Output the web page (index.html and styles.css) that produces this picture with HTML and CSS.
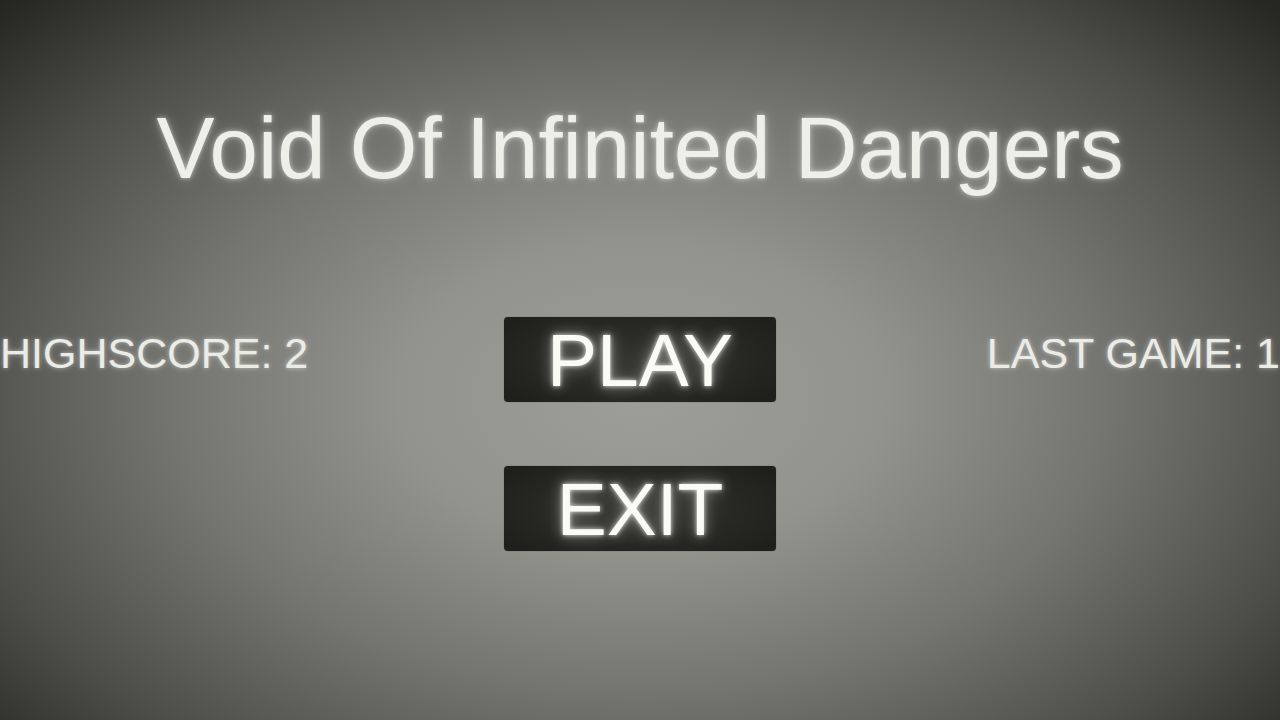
FILE: index.html
```html
<!DOCTYPE html>
<html lang="en">
<head>
    <meta charset="UTF-8">
    <meta name="viewport" content="width=device-width, initial-scale=1.0">
    <title>Void Of Infinited Dangers</title>
    <link rel="stylesheet" href="styles.css">
</head>
<body>
    <main class="menu">
        <h1 class="title">Void Of Infinited Dangers</h1>

        <div class="board">
            <div class="score score-left">HIGHSCORE: 2</div>
            <div class="buttons">
                <button class="menu-btn">PLAY</button>
                <button class="menu-btn">EXIT</button>
            </div>
            <div class="score score-right">LAST GAME: 1</div>
        </div>
    </main>
</body>
</html>
```

FILE: styles.css
```css
html, body {
    height: 100%;
}
body {
    margin: 0;
    overflow: hidden;
    font-family: 'Liberation Sans', Arial, sans-serif;
    background: radial-gradient(ellipse 76% 86% at 50% 55%, #9d9e98 0%, #92938d 25%, #747570 48%, #4c4d48 72%, #272824 90%, #1a1a18 100%);
    color: #f2f2ec;
}
.menu {
    display: flex;
    flex-direction: column;
    height: 100%;
}
.title {
    margin: 98px 0 0;
    font-size: 87px;
    font-weight: normal;
    line-height: 1.15;
    text-align: center;
    color: #efefe9;
    text-shadow: 0 0 5px rgba(255,255,255,0.55), 0 0 14px rgba(255,255,255,0.25);
}
.board {
    display: grid;
    grid-template-columns: 1fr 272px 1fr;
    gap: 40px;
    margin-top: 119px;
}
.score {
    font-size: 43px;
    line-height: 73px;
    white-space: nowrap;
    color: #ecece6;
    text-shadow: 0 0 4px rgba(255,255,255,0.45), 0 0 10px rgba(255,255,255,0.2);
}
.score-left {
    text-align: left;
}
.score-right {
    text-align: right;
}
.buttons {
    display: flex;
    flex-direction: column;
    gap: 64px;
}
.menu-btn {
    height: 85px;
    padding: 1px 0 0;
    border: none;
    border-radius: 4px;
    background: radial-gradient(ellipse 60% 70% at 50% 50%, #33332f 0%, #252622 70%, #1f201c 100%);
    box-shadow: 0 0 1px rgba(0,0,0,0.6);
    font-family: inherit;
    font-size: 75px;
    line-height: 85px;
    color: #fbfbf6;
    text-shadow: 0 0 5px rgba(255,255,255,0.85), 0 0 14px rgba(255,255,255,0.45), 0 0 26px rgba(255,255,255,0.2);
    cursor: pointer;
}
.menu-btn:hover {
    background: #2e2f2b;
}
```
